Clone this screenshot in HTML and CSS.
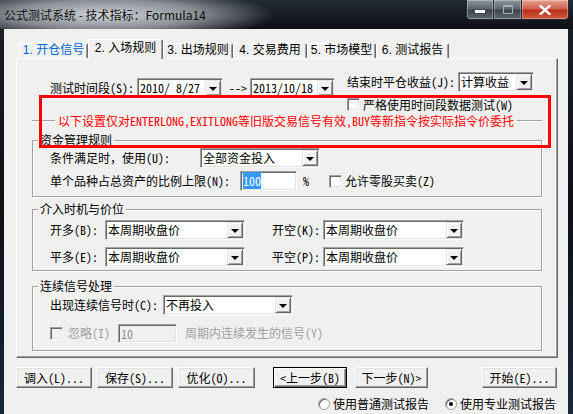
FILE: index.html
```html
<!DOCTYPE html>
<html lang="zh-CN">
<head>
    <meta charset="UTF-8">
    <title>公式测试系统 - 技术指标：Formula14</title>
    <link rel="stylesheet" href="styles.css">
</head>
<body>
<div class="window">
    <div class="titlebar">
        <span class="title">公式测试系统 - 技术指标：Formula14</span>
        <div class="caption">
            <span class="cap-btn cap-min"><span class="min-bar"></span></span>
            <span class="cap-btn cap-max"><span class="max-box"></span></span>
            <span class="cap-btn cap-close">
                <svg width="12" height="10" viewBox="0 0 12 10"><path d="M1.5 1 L10.5 9 M10.5 1 L1.5 9" stroke="#fff" stroke-width="2.4" stroke-linecap="square"/></svg>
            </span>
        </div>
    </div>

    <div class="client">
        <div class="tabs">
            <span class="tab tab-1 hot">1. 开仓信号</span>
            <span class="tab tab-2 active">2. 入场规则</span>
            <span class="tab tab-3">3. 出场规则</span>
            <span class="tab tab-4">4. 交易费用</span>
            <span class="tab tab-5">5. 市场模型</span>
            <span class="tab tab-6">6. 测试报告</span>
        </div>

        <div class="panel">
            <div class="row-period">
                <div class="period">
                    <span class="lbl lbl-period">测试时间段(S):</span>
                    <div class="combo combo-date"><span class="combo-text">2010/ 8/27</span><span class="drop"></span></div>
                    <span class="arrow">--&gt;</span>
                    <div class="combo combo-date2"><span class="combo-text">2013/10/18</span><span class="drop"></span></div>
                </div>
                <div class="close-profit">
                    <span class="lbl lbl-close">结束时平仓收益(J):</span>
                    <div class="combo combo-profit"><span class="combo-text">计算收益</span><span class="drop"></span></div>
                </div>
            </div>

            <div class="row-strict">
                <span class="check"></span>
                <span class="check-text">严格使用时间段数据测试(W)</span>
            </div>

            <div class="notice">
                <span class="notice-line notice-left"></span>
                <span class="notice-text">以下设置仅对ENTERLONG,EXITLONG等旧版交易信号有效,BUY等新指令按实际指令价委托</span>
                <span class="notice-line"></span>
            </div>

            <div class="group group-money">
                <span class="group-title">资金管理规则</span>
                <div class="g-row g-row-first">
                    <span class="lbl lbl-use">条件满足时，使用(U):</span>
                    <div class="combo combo-money"><span class="combo-text">全部资金投入</span><span class="drop"></span></div>
                </div>
                <div class="g-row g-row-second">
                    <span class="lbl lbl-ratio">单个品种占总资产的比例上限(N):</span>
                    <div class="edit edit-ratio"><span class="selected">100</span></div>
                    <span class="percent">%</span>
                    <span class="check"></span>
                    <span class="check-text">允许零股买卖(Z)</span>
                </div>
            </div>

            <div class="group group-entry">
                <span class="group-title">介入时机与价位</span>
                <div class="g-row g-row-entry1">
                    <span class="lbl lbl-side">开多(B):</span>
                    <div class="combo combo-price"><span class="combo-text">本周期收盘价</span><span class="drop"></span></div>
                    <span class="lbl lbl-side2">开空(K):</span>
                    <div class="combo combo-price2"><span class="combo-text">本周期收盘价</span><span class="drop"></span></div>
                </div>
                <div class="g-row g-row-entry2">
                    <span class="lbl lbl-side">平多(E):</span>
                    <div class="combo combo-price"><span class="combo-text">本周期收盘价</span><span class="drop"></span></div>
                    <span class="lbl lbl-side2">平空(P):</span>
                    <div class="combo combo-price2"><span class="combo-text">本周期收盘价</span><span class="drop"></span></div>
                </div>
            </div>

            <div class="group group-signal">
                <span class="group-title">连续信号处理</span>
                <div class="g-row g-row-sig1">
                    <span class="lbl lbl-signal">出现连续信号时(C):</span>
                    <div class="combo combo-signal"><span class="combo-text">不再投入</span><span class="drop"></span></div>
                </div>
                <div class="g-row g-row-sig2 disabled">
                    <span class="check check-off"></span>
                    <span class="lbl lbl-ignore">忽略(I)</span>
                    <div class="edit edit-off">10</div>
                    <span class="sig-text">周期内连续发生的信号(Y)</span>
                </div>
            </div>
        </div>

        <div class="buttons">
            <span class="btn btn-load">调入(L)...</span>
            <span class="btn btn-save">保存(S)...</span>
            <span class="btn btn-opt">优化(O)...</span>
            <span class="btn btn-prev default">&lt;上一步(B)</span>
            <span class="btn btn-next">下一步(N)&gt;</span>
            <span class="btn btn-start">开始(E)...</span>
        </div>

        <div class="radios">
            <span class="radio"></span>
            <span class="radio-text">使用普通测试报告</span>
            <span class="radio radio-2 checked"></span>
            <span class="radio-text">使用专业测试报告</span>
        </div>
    </div>

    <div class="callout"></div>
</div>
</body>
</html>
```

FILE: styles.css
```css
body {
    margin: 0;
    background: #0f1318;
    font-family: "Noto Sans Mono CJK SC", "Noto Sans CJK SC", sans-serif;
    font-size: 12px;
    line-height: 14px;
    color: #000;
}
.window {
    position: relative;
    width: 573px;
    height: 414px;
    overflow: hidden;
    background: linear-gradient(to bottom, #1b2129, #0c0f14 50%, #18273a);
}

/* title bar */
.titlebar {
    height: 29px;
    display: flex;
    align-items: flex-start;
    background:
        radial-gradient(ellipse 170px 26px at 105px 15px, rgba(214,218,223,0.97), rgba(196,201,207,0.65) 55%, rgba(150,156,162,0) 100%),
        linear-gradient(#242a32, #0d1015);
}
.title {
    padding: 7px 0 0 4px;
    font-family: "Noto Sans CJK SC", sans-serif;
    font-size: 12px;
    line-height: 15px;
    color: #111;
}
.caption {
    margin-left: auto;
    margin-right: 4px;
    display: flex;
}
.cap-btn {
    box-sizing: border-box;
    height: 20px;
    display: flex;
    align-items: center;
    justify-content: center;
    border: 1px solid #222830;
    border-top: none;
    box-shadow: inset 0 0 0 1px rgba(255,255,255,0.3);
    background: linear-gradient(#8d949c, #5b636c 48%, #3a424b 52%, #5d6770);
}
.cap-min {
    width: 28px;
    border-bottom-left-radius: 4px;
}
.cap-max {
    width: 28px;
    border-left: none;
}
.cap-close {
    width: 47px;
    border-left: none;
    border-bottom-right-radius: 4px;
    background: linear-gradient(#e7a592, #d0614d 45%, #b8301e 55%, #d05a3c);
}
.min-bar {
    width: 10px;
    height: 3px;
    margin-top: 4px;
    background: #fff;
    box-shadow: 0 0 1px #333;
}
.max-box {
    width: 8px;
    height: 6px;
    border: 1px solid #a9aeb4;
    border-top-width: 2px;
}

/* client area */
.client {
    margin-left: 4px;
    width: 564px;
    height: 385px;
    box-sizing: border-box;
    padding-left: 12px;
    background: #f0f0f0;
}
.tabs {
    display: flex;
    align-items: flex-end;
    height: 19px;
    padding: 10px 0 0 3px;
    font-family: "Liberation Sans", "Noto Sans CJK SC", sans-serif;
}
.tab {
    box-sizing: border-box;
    height: 15px;
    line-height: 13px;
    text-align: center;
    border: 1px solid #fff;
    border-bottom: none;
    border-right-color: #696969;
    border-radius: 2px 2px 0 0;
    box-shadow: inset -1px 0 0 #a0a0a0;
}
.tab.hot {
    color: #0066cc;
}
.tab.active {
    position: relative;
    z-index: 1;
    height: 20px;
    margin-bottom: -1px;
    padding-bottom: 3px;
    line-height: 16px;
    background: #f0f0f0;
}
.tab-1 { width: 69px; }
.tab-2 { width: 75px; }
.tab-3 { width: 70px; }
.tab-4 { width: 74px; }
.tab-5 { width: 69px; }
.tab-6 { width: 73px; }

.panel {
    box-sizing: border-box;
    width: 542px;
    height: 300px;
    padding: 0 15px;
    border: 1px solid #fff;
    border-right-color: #696969;
    border-bottom-color: #696969;
    box-shadow: inset -1px -1px 0 #a0a0a0;
}

/* common controls */
.lbl {
    flex: none;
    white-space: nowrap;
}
.combo {
    box-sizing: border-box;
    display: flex;
    align-items: center;
    flex: none;
    height: 20px;
    padding: 1px;
    border: 1px solid;
    border-color: #a0a0a0 #fff #fff #a0a0a0;
    box-shadow: inset 1px 1px 0 #696969, inset -1px -1px 0 #e3e3e3;
    background: #fff;
}
.combo-text {
    padding-left: 1px;
    white-space: pre;
    line-height: 16px;
}
.drop {
    box-sizing: border-box;
    width: 16px;
    height: 16px;
    margin-left: auto;
    flex: none;
    display: flex;
    align-items: center;
    justify-content: center;
    background: #f0f0f0;
    border: 1px solid;
    border-color: #e3e3e3 #696969 #696969 #e3e3e3;
    box-shadow: inset 1px 1px 0 #fff, inset -1px -1px 0 #a0a0a0;
}
.drop::after {
    content: "";
    width: 0;
    height: 0;
    margin-top: 1px;
    border-left: 4px solid transparent;
    border-right: 4px solid transparent;
    border-top: 4px solid #000;
}
.edit {
    box-sizing: border-box;
    flex: none;
    height: 20px;
    padding: 2px 2px 0;
    border: 1px solid;
    border-color: #a0a0a0 #fff #fff #a0a0a0;
    box-shadow: inset 1px 1px 0 #696969, inset -1px -1px 0 #e3e3e3;
    background: #fff;
}
.selected {
    background: #3399ff;
    color: #fff;
}
.check {
    box-sizing: border-box;
    flex: none;
    width: 13px;
    height: 13px;
    border: 1px solid;
    border-color: #a0a0a0 #fff #fff #a0a0a0;
    box-shadow: inset 1px 1px 0 #696969, inset -1px -1px 0 #e3e3e3;
    background: #fff;
}
.check-text {
    margin-left: 3px;
    white-space: nowrap;
}

/* period row */
.row-period {
    display: flex;
    height: 26px;
    margin-top: 13px;
}
.period {
    display: flex;
    align-items: center;
    height: 20px;
    margin-top: 6px;
    padding-left: 18px;
}
.lbl-period { width: 87px; }
.combo-date { width: 86px; }
.arrow {
    width: 18px;
    margin: 0 3px 0 6px;
    white-space: nowrap;
}
.combo-date2 { width: 85px; }
.close-profit {
    display: flex;
    align-items: center;
    height: 20px;
    margin-left: 12px;
}
.lbl-close { width: 111px; }
.combo-profit { width: 76px; }

.row-strict {
    display: flex;
    align-items: center;
    height: 13px;
    margin-left: 315px;
}

/* notice separator */
.notice {
    display: flex;
    align-items: center;
    height: 14px;
    margin-top: 3px;
}
.notice-line {
    flex: 1;
    height: 0;
    border-top: 1px solid #a0a0a0;
    border-bottom: 1px solid #fff;
}
.notice-left {
    flex: none;
    width: 23px;
}
.notice-text {
    margin: 0 3px;
    color: #ff0000;
    white-space: nowrap;
}

/* group boxes */
.group {
    border: 1px solid #a0a0a0;
    box-shadow: 1px 1px 0 #fff, inset 1px 1px 0 #fff;
}
.group-title {
    display: table;
    margin: -8px 0 0 5px;
    padding: 0 2px;
    line-height: 14px;
    background: #f0f0f0;
}
.g-row {
    display: flex;
    align-items: center;
    height: 20px;
    padding-left: 17px;
}
.group-money {
    margin-top: 12px;
    padding-bottom: 5px;
}
.g-row-first { margin-top: 1px; }
.g-row-second { margin-top: 3px; }
.lbl-use { width: 150px; }
.combo-money { width: 120px; }
.lbl-ratio { width: 190px; }
.edit-ratio {
    width: 57px;
    padding-left: 2px;
}
.percent {
    width: 26px;
    margin-left: 6px;
}

.group-entry {
    margin-top: 12px;
    padding-bottom: 3px;
}
.g-row-entry1 { margin-top: 4px; }
.g-row-entry2 { margin-top: 7px; }
.lbl-side { width: 55px; }
.combo-price { width: 140px; }
.lbl-side2 {
    width: 51px;
    margin-left: 27px;
}
.combo-price2 { width: 141px; }

.group-signal {
    margin-top: 15px;
    padding-bottom: 7px;
}
.g-row-sig1 { margin-top: 2px; }
.g-row-sig2 { margin-top: 8px; }
.lbl-signal { width: 113px; }
.combo-signal { width: 130px; }
.disabled {
    color: #a0a0a0;
}
.check-off {
    background: #f0f0f0;
}
.lbl-ignore {
    width: 50px;
    margin-left: 5px;
}
.edit-off {
    width: 59px;
    height: 19px;
    background: #f0f0f0;
    color: #8d8d8d;
}
.sig-text {
    margin-left: 8px;
    white-space: nowrap;
}

/* bottom buttons */
.buttons {
    display: flex;
    margin-top: 9px;
}
.btn {
    box-sizing: border-box;
    height: 21px;
    line-height: 19px;
    text-align: center;
    white-space: nowrap;
    border: 1px solid;
    border-color: #fff #696969 #696969 #fff;
    box-shadow: inset -1px -1px 0 #a0a0a0, inset 1px 1px 0 #e3e3e3;
    background: #f0f0f0;
}
.btn.default {
    border-color: #000;
    box-shadow: inset 1px 1px 0 #fff, inset -1px -1px 0 #696969, inset -2px -2px 0 #a0a0a0;
}
.btn-load { width: 76px; }
.btn-save { width: 76px; margin-left: 5px; }
.btn-opt { width: 77px; margin-left: 5px; }
.btn-prev { width: 74px; margin-left: 18px; }
.btn-next { width: 73px; margin-left: 8px; }
.btn-start { width: 75px; margin-left: 54px; }

.radios {
    display: flex;
    align-items: center;
    height: 14px;
    margin-top: 9px;
    padding-left: 302px;
}
.radio {
    box-sizing: border-box;
    flex: none;
    width: 12px;
    height: 12px;
    border-radius: 50%;
    border: 1px solid #a0a0a0;
    box-shadow: inset 1px 1px 0 #696969;
    background: #fff;
    display: flex;
    align-items: center;
    justify-content: center;
}
.radio.checked::after {
    content: "";
    width: 4px;
    height: 4px;
    border-radius: 50%;
    background: #000;
}
.radio-2 {
    margin-left: 16px;
}
.radio-text {
    margin-left: 3px;
    white-space: nowrap;
}

/* red annotation frame over the dialog */
.callout {
    position: absolute;
    left: 39px;
    top: 95px;
    width: 512px;
    height: 53px;
    box-sizing: border-box;
    border: 3px solid #ff0000;
}
```
